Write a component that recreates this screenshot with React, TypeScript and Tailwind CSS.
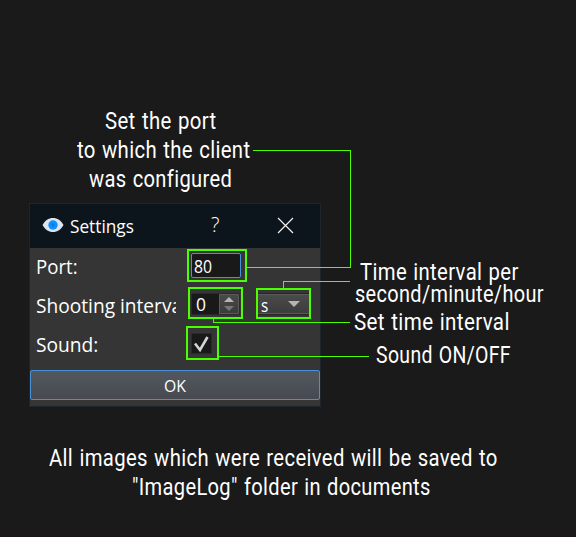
import { useLayoutEffect, useRef } from "react";
import type { ReactNode } from "react";

/* One line of text, condensed or widened to an exact advance width. */
function Fit({ width, className = "", children }: { width: number; className?: string; children: ReactNode }) {
  const ref = useRef<HTMLSpanElement>(null);
  useLayoutEffect(() => {
    const el = ref.current;
    if (el) el.style.transform = `scaleX(${width / el.offsetWidth})`;
  }, [width]);
  return (
    <span className={`block shrink-0 ${className}`} style={{ width }}>
      <span ref={ref} className="inline-block origin-left whitespace-pre">
        {children}
      </span>
    </span>
  );
}

const note = "font-['Roboto',sans-serif] text-[23.5px] leading-[29px] tracking-[0.4px] [word-spacing:1px] text-white";
const ui = "font-['Open_Sans',sans-serif] text-white";

function Eye() {
  return (
    <svg width="22" height="16" viewBox="0 0 22 16" className="ml-[12px] -mt-[2px] shrink-0">
      <path d="M.5 8C3 3.500 6.500 1 11 1s8 2.500 10.500 7C19 12.500 15.500 15 11 15S3 12.500.5 8Z" fill="#dce4f3" />
      <circle cx="11" cy="8" r="4.700" fill="#0b92ff" />
      <circle cx="11" cy="8" r="1.700" fill="#087ce8" />
    </svg>
  );
}

function TitleBar() {
  return (
    <div className="flex h-[44px] items-center bg-[#0d151c]">
      <Eye />
      <Fit width={64} className={`${ui} ml-[6px] text-[17.5px] leading-[24px]`}>Settings</Fit>
      <Fit width={8} className={`${ui} ml-[77px] text-[20px] leading-[24px] font-light -mt-[2px]`}>?</Fit>
      <svg width="17" height="17" viewBox="0 0 17 17" className="ml-[58px] -mt-[1px]">
        <path d="M1 1 16 16M16 1 1 16" stroke="#f2f2f2" strokeWidth="1.200" />
      </svg>
    </div>
  );
}

export default function App() {
  return (
    <div className="relative h-[537px] w-[576px] overflow-hidden bg-[#1a1a1a]">
      <div className={`${note} flex w-[326px] flex-col items-center pt-[107px]`}>
        <Fit width={111} className="mr-[5px]">Set the port</Fit>
        <Fit width={173}>to which the client</Fit>
        <Fit width={143} className="mr-[6px]">was configured</Fit>
      </div>

      <div className="mt-[9px] ml-[29px] h-[204px] w-[292px] border border-[#1d262e] bg-[#353535]">
        <TitleBar />
        <div className="flex h-[37px] pl-[6px] pt-[1px]">
          <div className="w-[151px] pt-[5px]">
            <Fit width={42} className={`${ui} text-[19.5px] leading-[26px]`}>Port:</Fit>
          </div>
          <div className="h-[33px] w-[60px] border-2 border-[#4cff00] p-[2px]">
            <div className="flex h-[25px] w-[50px] items-center rounded-[2px] border border-[#4a90d9] bg-[#191919] pl-[2px]">
              <Fit width={18} className={`${ui} text-[17.5px] leading-[22px]`}>80</Fit>
            </div>
          </div>
        </div>

        <div className="flex h-[39px] pl-[6px] pt-[2px]">
          <div className="mr-[12px] w-[140px] overflow-hidden pt-[6px]">
            <Fit width={156} className={`${ui} text-[19.5px] leading-[26px]`}>Shooting interval:</Fit>
          </div>
          <div className="h-[32px] w-[55px] border-2 border-[#4cff00] pt-[4px] pl-[1px]">
            <div className="flex h-[22px] w-[49px] overflow-hidden rounded-[2px] border border-[#2a2a2a] bg-[#191919]">
              <Fit width={10} className={`${ui} ml-[4px] text-[17.5px] leading-[20px]`}>0</Fit>
              <div className="ml-auto flex w-[20px] flex-col items-center justify-center gap-[4px] border border-[#5a5a5a] bg-gradient-to-b from-[#494949] to-[#3b3b3b]">
                <svg width="10" height="5" viewBox="0 0 10 5"><path d="M0 5 5 0l5 5Z" fill="#b4b4b4" /></svg>
                <svg width="10" height="5" viewBox="0 0 10 5"><path d="M0 0h10L5 5Z" fill="#777" /></svg>
              </div>
            </div>
          </div>
          <div className="mt-[1px] ml-[13px] h-[31px] w-[55px] border-2 border-[#4cff00] pt-[4px]">
            <div className="flex h-[20px] items-center border-y border-[#5a5a5a] bg-gradient-to-b from-[#4a4a4a] to-[#3c3c3c] shadow-[0_1px_0_#252525,0_-1px_0_#252525]">
              <Fit width={7} className={`${ui} ml-[3px] text-[17.5px] leading-[20px] pt-[1px]`}>s</Fit>
              <svg width="12" height="6" viewBox="0 0 12 6" className="ml-[20px]"><path d="M0 0h12L6 6Z" fill="#b4b4b4" /></svg>
            </div>
          </div>
        </div>

        <div className="flex h-[46px] pl-[6px] pt-[2px]">
          <div className="w-[150px] pt-[6px]">
            <Fit width={62} className={`${ui} text-[19.5px] leading-[26px]`}>Sound:</Fit>
          </div>
          <div className="h-[34px] w-[33px] border-2 border-[#4cff00] pt-[5px] pl-[3px]">
            <div className="h-[21px] w-[21px] border border-[#2a2a2a] bg-[#191919]">
              <svg width="19" height="19" viewBox="0 0 19 19">
                <path d="M3 9.500 8 16 15.500 3" fill="none" stroke="#d4d4d4" strokeWidth="2.600" />
              </svg>
            </div>
          </div>
        </div>

        <div className="flex h-[30px] justify-center rounded-[2px] border border-[#4a90d9] bg-gradient-to-b from-[#535860] to-[#464a50]">
          <Fit width={22} className={`${ui} text-[16.5px] leading-[30px]`}>OK</Fit>
        </div>
      </div>

      <div className={`${note} flex flex-col items-center pt-[37px] pr-[30px]`}>
        <Fit width={449}>All images which were received will be saved to</Fit>
        <Fit width={299} className="ml-[16px]">"ImageLog" folder in documents</Fit>
      </div>

      {/* Callout labels and their connector lines */}
      <svg className="absolute inset-0" width="576" height="537" fill="none" stroke="#4cff00" shapeRendering="crispEdges">
        <path d="M253 150.500H350.500V267.500H247M283.500 288V281.500H350M213.500 319V322.500H350M219 356.500H369" />
      </svg>
      <div className={`${note} absolute top-[258px] left-[355px]`}>
        <Fit width={159} className="ml-[5px] h-[22px] leading-[29px]">Time interval per</Fit>
        <Fit width={189} className="h-[28px]">second/minute/hour</Fit>
        <Fit width={156} className="-ml-[1px] h-[33px]">Set time interval</Fit>
        <Fit width={135} className="ml-[21px]">Sound ON/OFF</Fit>
      </div>
      <div className="absolute bottom-0 left-0 h-px w-full bg-[#1c1518]" />
    </div>
  );
}
